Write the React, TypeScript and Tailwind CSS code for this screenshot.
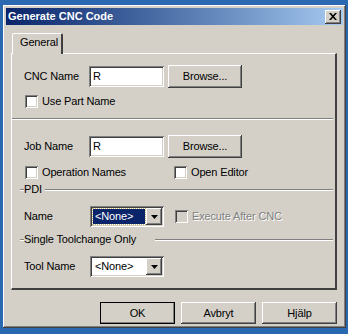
const raised =
  "bg-[#d4d0c8] shadow-[inset_-1px_-1px_#404040,inset_1px_1px_#ffffff,inset_-2px_-2px_#808080,inset_2px_2px_#d4d0c8]";
const sunken =
  "shadow-[inset_1px_1px_#808080,inset_-1px_-1px_#ffffff,inset_2px_2px_#404040,inset_-2px_-2px_#d4d0c8]";

const Checkbox = ({ label, disabled = false }: { label: string; disabled?: boolean }) => (
  <div className="flex items-center h-[13px]">
    <div className={`w-[13px] h-[13px] ${disabled ? "bg-[#d4d0c8]" : "bg-white"} ${sunken}`} />
    <span
      className={`ml-[4px] leading-[13px] ${disabled ? "text-[#808080] [text-shadow:1px_1px_#ffffff]" : ""}`}
    >
      {label}
    </span>
  </div>
);

const Arrow = () => (
  <svg width="7" height="4" viewBox="0 0 7 4">
    <path d="M0 0h7L3.5 4z" fill="#000" />
  </svg>
);

const Select = ({ selected = false }: { selected?: boolean }) => (
  <div className={`w-[74px] h-[21px] bg-white ${sunken} p-[2px] flex`}>
    <div className="flex-1 p-[1px]">
      <div
        className={`h-full pl-[2px] flex items-center leading-none ${
          selected ? "bg-[#0a246a] text-white outline outline-1 outline-dotted outline-[#c8b870]" : ""
        }`}
      >
        &lt;None&gt;
      </div>
    </div>
    <div className={`w-[16px] h-full ${raised} flex items-center justify-center`}>
      <Arrow />
    </div>
  </div>
);

const Input = () => (
  <div className={`w-[75px] h-[21px] bg-white ${sunken} pl-[4px] flex items-center leading-none`}>R</div>
);

const Button = ({ text, w = "w-[74px]", h = "h-[23px]", def = false }: { text: string; w?: string; h?: string; def?: boolean }) => (
  <div
    className={`${w} ${h} ${raised} flex items-center justify-center leading-none ${
      def ? "outline outline-1 outline-black -outline-offset-1" : ""
    }`}
  >
    {text}
  </div>
);

const GroupLine = ({ text, gap }: { text: string; gap: string }) => (
  <div className="flex items-center h-[13px] pl-[8px] pr-[2px]">
    <div className="w-[4px] h-[2px] border-t border-t-[#808080] border-b border-b-white" />
    <span className={`leading-[13px] ${gap}`}>{text}</span>
    <div className="flex-1 h-[2px] border-t border-t-[#808080] border-b border-b-white" />
  </div>
);

export default function App() {
  return (
    <div className="w-[348px] h-[334px] bg-[#2a68b0] pl-[3px] pt-[5px] font-['Liberation_Sans',sans-serif] text-[11px] tracking-[-0.15px] text-black overflow-hidden">
      <div className={`w-[343px] h-[323px] p-[3px] ${raised}`}>
        <div className="h-[17px] bg-gradient-to-r from-[#0a246a] to-[#a6caf0] flex items-center justify-between pl-[2px] pr-[2px]">
          <span className="text-white font-bold leading-none tracking-normal">Generate CNC Code</span>
          <div className={`w-[16px] h-[14px] ${raised} flex items-center justify-center`}>
            <svg width="8" height="7" viewBox="0 0 8 7">
              <path d="M0 0h2l2 2.2L6 0h2L5 3.5 8 7H6L4 4.8 2 7H0l3-3.5z" fill="#000" />
            </svg>
          </div>
        </div>

        <div className="pl-[5px] pt-[8px]">
          <div className="ml-[1px] w-[51px] h-[21px] bg-[#d4d0c8] border-t border-l border-t-white border-l-white border-r-2 border-r-[#404040] rounded-t-[2px] relative z-10 -mb-[1px] pl-[7px] pt-[3px] leading-none">
            General
          </div>
          <div className="w-[326px] h-[237px] border-t border-l border-t-white border-l-white border-r-2 border-b-2 border-r-[#404040] border-b-[#404040] flex flex-col">
            <div className="flex items-center mt-[11px] pl-[12px] h-[23px]">
              <span className="w-[65px]">CNC Name</span>
              <Input />
              <div className="ml-[4px]">
                <Button text="Browse..." />
              </div>
            </div>
            <div className="mt-[7px] pl-[13px]">
              <Checkbox label="Use Part Name" />
            </div>
            <div className="mt-[10px] mr-[2px] h-[2px] border-t border-t-[#808080] border-b border-b-white" />
            <div className="flex items-center mt-[15px] pl-[12px] h-[23px]">
              <span className="w-[65px]">Job Name</span>
              <Input />
              <div className="ml-[4px]">
                <Button text="Browse..." />
              </div>
            </div>
            <div className="mt-[8px] pl-[13px] flex">
              <div className="w-[149px]">
                <Checkbox label="Operation Names" />
              </div>
              <Checkbox label="Open Editor" />
            </div>
            <div className="mt-[4px]">
              <GroupLine text="PDI" gap="pr-[3px]" />
            </div>
            <div className="flex items-center mt-[10px] pl-[12px] h-[21px]">
              <span className="w-[66px]">Name</span>
              <Select selected />
              <div className="ml-[11px]">
                <Checkbox label="Execute After CNC" disabled />
              </div>
            </div>
            <div className="mt-[6px]">
              <GroupLine text="Single Toolchange Only" gap="pr-[19px]" />
            </div>
            <div className="flex items-center mt-[10px] pl-[12px] h-[21px]">
              <span className="w-[66px]">Tool Name</span>
              <Select />
            </div>
          </div>
        </div>

        <div className="flex justify-end gap-[6px] mt-[12px] pr-[6px]">
          <Button text="OK" w="w-[75px]" h="h-[22px]" def />
          <Button text="Avbryt" w="w-[75px]" h="h-[22px]" />
          <Button text="Hjälp" w="w-[75px]" h="h-[22px]" />
        </div>
      </div>
    </div>
  );
}
